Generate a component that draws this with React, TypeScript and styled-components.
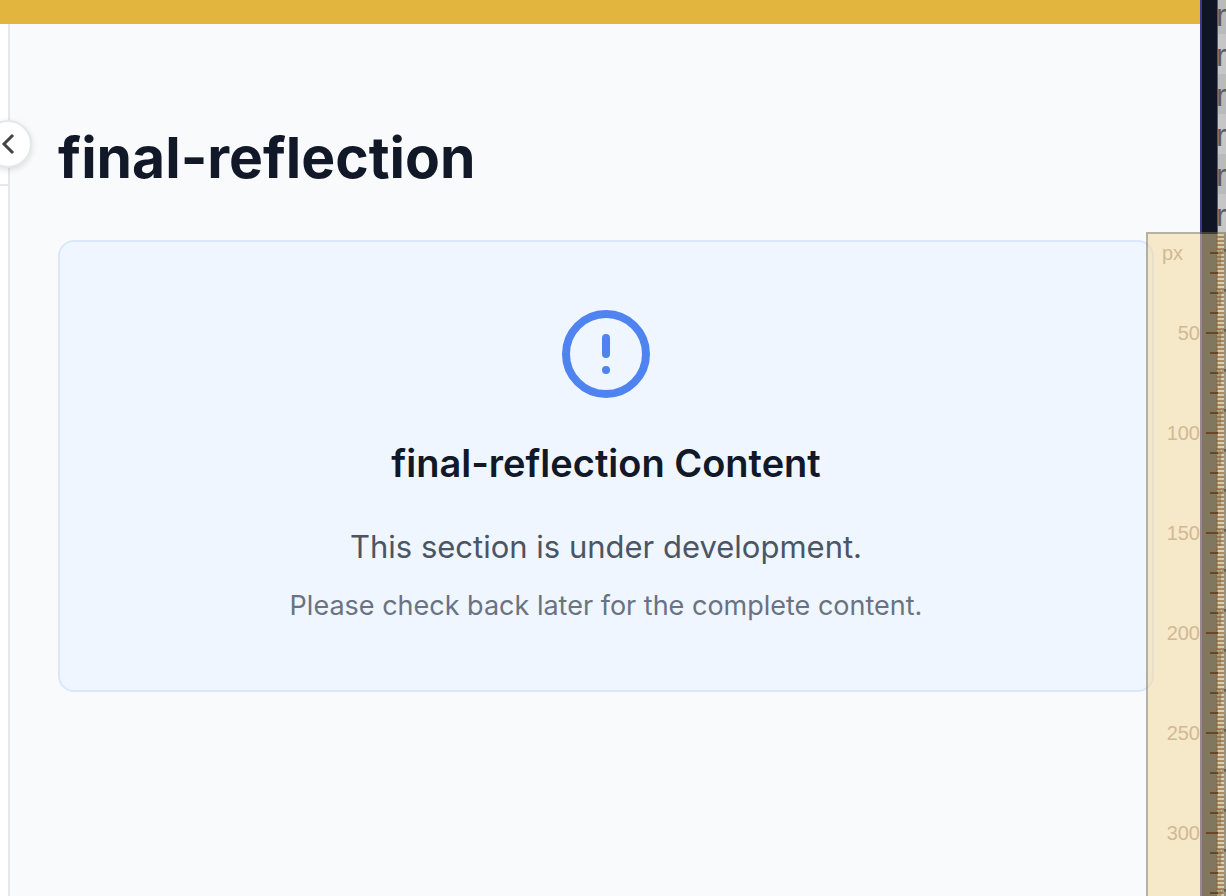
import React from "react";
import styled, { createGlobalStyle } from "styled-components";

const Global = createGlobalStyle`
  *, *::before, *::after { box-sizing: border-box; }
  body { margin: 0; font-family: Inter, "Liberation Sans", sans-serif; overflow: hidden; }
  h1, h2, p, ul, ol { margin: 0; padding: 0; }
`;

const Desktop = styled.div`
  position: relative;
  display: flex;
  height: 100vh;
  overflow: hidden;
  background: #f9fafc;
`;

const AppWindow = styled.div`
  flex: 1;
  min-width: 0;
  display: flex;
  flex-direction: column;
`;

const Banner = styled.header`
  height: 24px;
  flex: none;
  background: #e2b53e;
`;

const Body = styled.div`
  flex: 1;
  display: flex;
  min-height: 0;
`;

const Sidebar = styled.aside`
  position: relative;
  flex: none;
  width: 10px;
  background: #fff;
  border-right: 2px solid #e5e7eb;
`;

const SidebarHeader = styled.div`
  height: 162px;
  border-bottom: 2px solid #e5e7eb;
`;

const CollapseButton = styled.button`
  position: absolute;
  top: 96px;
  right: -24px;
  width: 48px;
  height: 48px;
  padding: 0;
  display: grid;
  place-items: center;
  border: 2px solid #e5e7eb;
  border-radius: 50%;
  background: #fff;
  box-shadow: 0 2px 6px rgba(0, 0, 0, 0.12);
  color: #444;
`;

const Main = styled.main`
  flex: 1;
  min-width: 0;
  padding: 98px 46px 48px 48px;
`;

const Title = styled.h1`
  font-size: 57px;
  line-height: 72px;
  font-weight: 700;
  color: #111827;
`;

const Card = styled.section`
  margin-top: 46px;
  padding: 64px 48px;
  display: flex;
  flex-direction: column;
  align-items: center;
  text-align: center;
  border: 2px solid #dbe7fd;
  border-radius: 16px;
  background: #eff6ff;
`;

const AlertIcon = styled.svg`
  width: 96px;
  height: 96px;
  color: #4f83f0;
`;

const CardTitle = styled.h2`
  margin-top: 33px;
  font-size: 38px;
  line-height: 56px;
  font-weight: 600;
  color: #111827;
`;

const Lead = styled.p`
  margin-top: 32px;
  font-size: 31px;
  line-height: 48px;
  color: #4b5563;
`;

const Hint = styled.p`
  margin-top: 15px;
  font-size: 27px;
  line-height: 40px;
  color: #6b7280;
`;

const WindowEdge = styled.div`
  flex: none;
  width: 18px;
  background: #0f1524;
  border-left: 2px solid #3f3492;
  border-right: 1px solid #555b64;
`;

const FileList = styled.ul`
  flex: none;
  width: 8px;
  overflow: hidden;
  list-style: none;
  background: #c6c6c6;
`;

const FileRow = styled.li`
  height: 40px;
  margin-top: -6px;
  margin-bottom: 6px;
  font: 32px/42px "Liberation Sans", sans-serif;
  text-indent: -2px;
  color: #5c5c5c;
  &:nth-child(odd) { background: #b9bbba; }
`;

const Ruler = styled.div`
  position: absolute;
  top: 232px;
  right: 0;
  bottom: 0;
  width: 80px;
  overflow: hidden;
  border: 2px solid rgba(116, 104, 68, 0.5);
  border-bottom: 0;
  background: rgba(243, 216, 152, 0.5);
  background-clip: padding-box;
`;

const Scale = styled.svg`
  display: block;
  width: 100%;
  height: 100%;
  font-family: "Liberation Sans", sans-serif;
  font-size: 20px;
`;

const steps = Array.from({ length: 34 }, (_, i) => i + 1);
const fine = Array.from({ length: 170 }, (_, i) => i + 1);

export default function App() {
  return (
    <>
      <Global />
      <Desktop>
        <AppWindow>
          <Banner />
          <Body>
            <Sidebar>
              <SidebarHeader />
              <CollapseButton aria-label="Collapse sidebar">
                <svg width="32" height="32" viewBox="0 0 32 32" fill="none" stroke="currentColor" strokeWidth="3">
                  <path d="M21 7l-9 9 9 9" />
                </svg>
              </CollapseButton>
            </Sidebar>
            <Main>
              <Title>final-reflection</Title>
              <Card>
                <AlertIcon viewBox="0 0 24 24" fill="none" stroke="currentColor" strokeWidth="2" strokeLinecap="round">
                  <circle cx="12" cy="12" r="10" />
                  <path d="M12 8v4M12 16h.01" />
                </AlertIcon>
                <CardTitle>final-reflection Content</CardTitle>
                <Lead>This section is under development.</Lead>
                <Hint>Please check back later for the complete content.</Hint>
              </Card>
            </Main>
          </Body>
        </AppWindow>
        <WindowEdge />
        <FileList>
          {Array.from({ length: 23 }, (_, i) => (
            <FileRow key={i}>r</FileRow>
          ))}
        </FileList>
        <Ruler>
          <Scale>
            {fine.map((n) => (
              <rect key={n} x="68" y={n * 4 - 2} width="8" height="2" fill="#8a5f30" fillOpacity="0.6" />
            ))}
            {steps.map((n) => {
              const major = n % 5 === 0;
              return (
                <rect key={n} x={major ? 58 : 62} y={n * 20 - 2} width={major ? 12 : 8} height="2" fill="#6b4623" />
              );
            })}
            <g fill="#d3b893">
              <text x="14" y="26">px</text>
              {steps.filter((n) => n % 5 === 0).map((n) => (
                <text key={n} x="52" y={n * 20 + 6} textAnchor="end">{n * 10}</text>
              ))}
            </g>
          </Scale>
        </Ruler>
      </Desktop>
    </>
  );
}
